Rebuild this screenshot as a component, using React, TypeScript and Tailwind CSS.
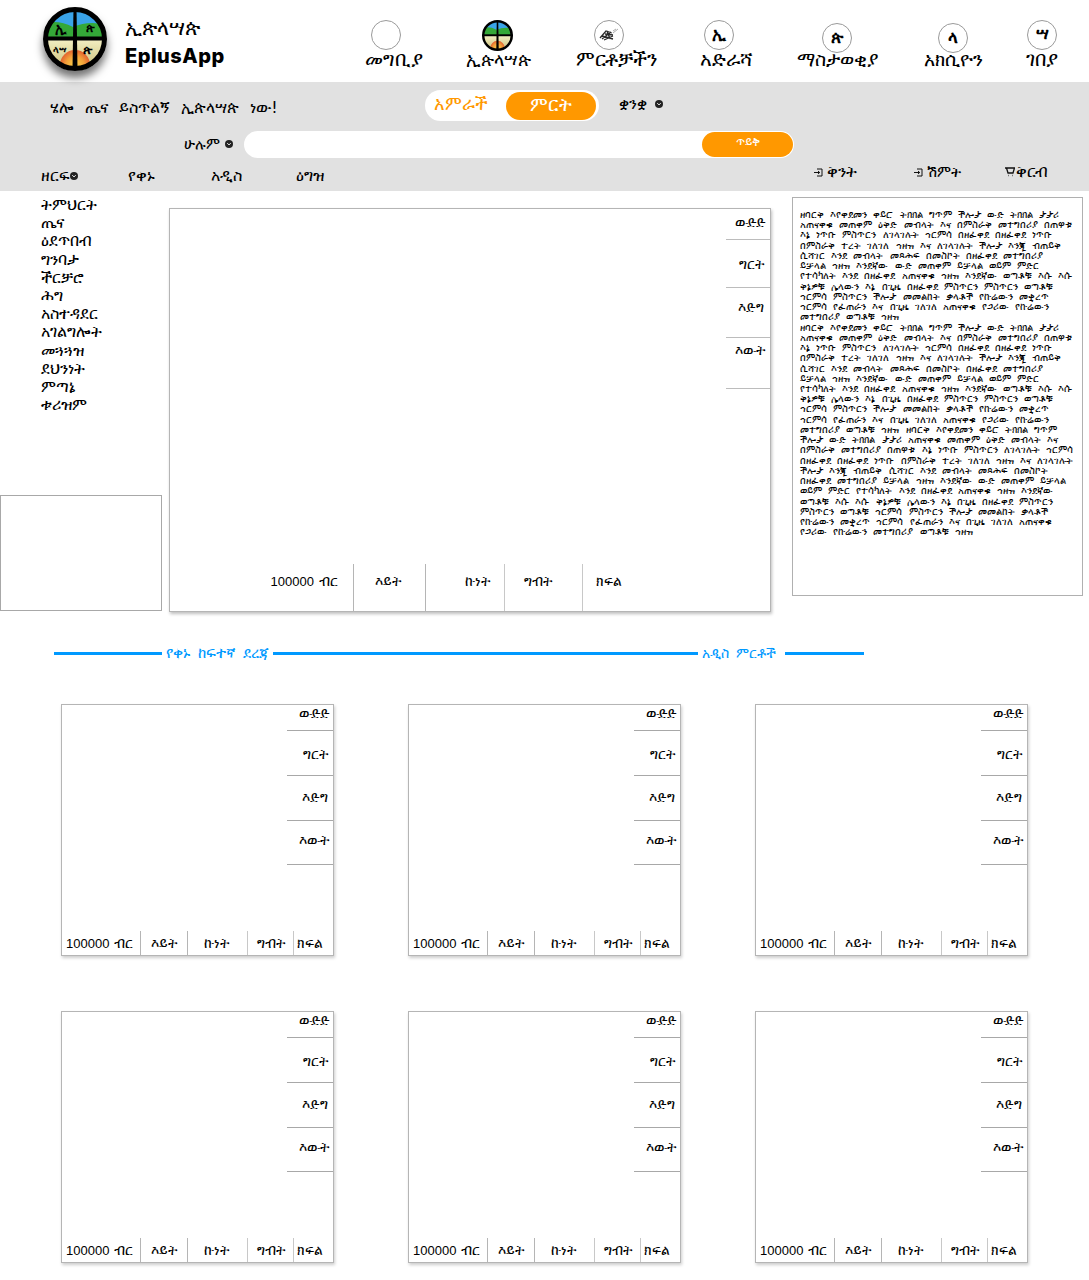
import React from "react";

const FONT = "font-['DejaVu_Sans','Noto_Sans',sans-serif]";

function Logo({ size, letters }: { size: number; letters?: boolean }) {
  const id = `l${size}`;
  return (
    <svg width={size} height={size} viewBox="0 0 64 64">
      <defs>
        <clipPath id={`${id}c`}><circle cx="32" cy="32" r="30" /></clipPath>
        <linearGradient id={`${id}s`} x1="0" y1="0" x2="0" y2="1">
          <stop offset="0" stopColor="#f3efc4" />
          <stop offset="1" stopColor="#c8bd72" />
        </linearGradient>
        <radialGradient id={`${id}u`}>
          <stop offset="0" stopColor="#fbd24a" />
          <stop offset="0.6" stopColor="#f2a03a" />
          <stop offset="1" stopColor="#e2622f" />
        </radialGradient>
      </defs>
      <g clipPath={`url(#${id}c)`}>
        <rect width="64" height="32" fill="#3aa3e8" />
        <path d="M0 17 Q14 12 30 20 Q46 13 64 18 V32 H0Z" fill="#34a838" />
        <rect y="32" width="64" height="32" fill={`url(#${id}s)`} />
        <circle cx="32" cy="58" r="15" fill={`url(#${id}u)`} />
      </g>
      <circle cx="32" cy="32" r="29.5" fill="none" stroke="#000" strokeWidth="5" />
      <path d="M30.5 1 H33.5 L34.5 62 H29.5Z" fill="#000" />
      <rect x="1" y="29.5" width="62" height="4" fill="#000" />
      {letters && (
        <g fill="#000" fontWeight="700" fontFamily="DejaVu Sans, sans-serif" textAnchor="middle">
          <text x="18" y="26" fontSize="14">ኢ</text>
          <text x="47" y="25" fontSize="12">ጵ</text>
          <text x="17" y="46" fontSize="9.5">ላሣ</text>
          <text x="45" y="47" fontSize="13">ጵ</text>
        </g>
      )}
    </svg>
  );
}

function NavItem({ w, label, children, low, shift = "", size = "text-[20px]" }: { w: string; label: string; children: React.ReactNode; low?: boolean; shift?: string; size?: string }) {
  return (
    <div className={`flex flex-col items-center ${w} ${low ? "pt-[23px]" : "pt-[20px]"}`}>
      {children}
      <div className={`${low ? "-mt-[7px]" : "-mt-[4px]"} ${shift} ${size} leading-[26px] text-black whitespace-nowrap`}>{label}</div>
    </div>
  );
}

function Circle({ t }: { t?: string }) {
  return (
    <div className="w-[30px] h-[30px] rounded-full border border-[#9a9a9a] bg-white flex items-center justify-center text-[17px] font-bold text-black">
      {t}
    </div>
  );
}

function Chevron() {
  return (
    <span className="inline-flex w-[8px] h-[8px] rounded-full bg-[#222] items-center justify-center">
      <svg width="6" height="6" viewBox="0 0 6 6"><path d="M1.3 2.2 3 3.9 4.7 2.2" stroke="#fff" strokeWidth="1" fill="none" /></svg>
    </span>
  );
}

function Enter() {
  return (
    <svg width="9" height="9" viewBox="0 0 9 9" fill="none" stroke="#111" strokeWidth="1">
      <path d="M3 1H8V8H3M0 4.5H5.5M4 3l1.7 1.5L4 6" />
    </svg>
  );
}

function Cart() {
  return (
    <svg width="10" height="10" viewBox="0 0 10 10" fill="none" stroke="#111" strokeWidth="1.3">
      <path d="M0 1H9.5L8 6H3L1.5 1M3 8.5h.5M7 8.5h.5" />
    </svg>
  );
}

function Price() {
  return (
    <>
      <span className="font-['Liberation_Sans',sans-serif] text-[13px]">100000</span>
      <span className="ml-[5px]">ብር</span>
    </>
  );
}

function Card({ big }: { big?: boolean }) {
  if (big) {
    return (
      <div className="relative w-[602px] h-[404px] border border-[#b5b5b5] bg-white shadow-[1px_2px_3px_rgba(0,0,0,0.25)] flex flex-col justify-between">
        <div className="flex justify-end">
          <div className="w-[44px] text-right text-[14px] leading-[20px] text-black">
            <div className="h-[31px] pr-[4px] pt-[3px] border-b border-[#bcbcbc]">ውድድ</div>
            <div className="h-[48px] pr-[6px] pt-[14px] border-b border-[#bcbcbc]">ግርት</div>
            <div className="h-[50px] pr-[6px] pt-[9px] border-b border-[#bcbcbc]">እድግ</div>
            <div className="h-[51px] pr-[5px] pt-[2px] border-b border-[#bcbcbc]">እውት</div>
          </div>
        </div>
        <div className="flex h-[47px] text-[14px] leading-[20px] text-black">
          <div className="w-[184px] pr-[15px] pt-[7px] text-right border-r border-[#b5b5b5] whitespace-nowrap"><Price /></div>
          <div className="w-[72px] pl-[21px] pt-[7px] border-r border-[#b5b5b5]">እይት</div>
          <div className="w-[79px] pl-[39px] pt-[7px] border-r border-[#c8c8c8]">ኩነት</div>
          <div className="w-[78px] pl-[19px] pt-[7px] border-r border-[#c8c8c8]">ግብት</div>
          <div className="pl-[13px] pt-[7px]">ክፍል</div>
        </div>
      </div>
    );
  }
  return (
    <div className="w-[273px] h-[252px] border border-[#b5b5b5] bg-white shadow-[1px_2px_3px_rgba(0,0,0,0.2)] flex flex-col justify-between">
      <div className="flex justify-end">
        <div className="w-[46px] text-right text-[14px] leading-[20px] text-black">
          <div className="h-[26px] pr-[3px] leading-[16px] border-b border-[#a8a8a8]">ውድድ</div>
          <div className="h-[45px] pr-[5px] pt-[13px] border-b border-[#a8a8a8]">ግርት</div>
          <div className="h-[45px] pr-[5px] pt-[11px] border-b border-[#a8a8a8]">እድግ</div>
          <div className="h-[44px] pr-[4px] pt-[9px] border-b border-[#a8a8a8]">እውት</div>
        </div>
      </div>
      <div className="flex h-[24px] text-[14px] leading-[20px] text-black items-stretch">
        <div className="w-[79px] pl-[4px] pt-[2px] border-r border-[#b5b5b5] whitespace-nowrap"><Price /></div>
        <div className="w-[47px] pl-[10px] pt-[2px] border-r border-[#b5b5b5]">እይት</div>
        <div className="w-[60px] pl-[16px] pt-[2px] border-r border-[#c8c8c8]">ኩነት</div>
        <div className="w-[46px] pl-[9px] pt-[2px] border-r border-[#c8c8c8]">ግብት</div>
        <div className="pl-[3px] pt-[2px]">ክፍል</div>
      </div>
    </div>
  );
}

const LINES = [
  "ዘባርቅ እየቀደመን ቀይሮ ትክክል ግጥም ችሎታ ውድ ትክክል ታታሪ",
  "አጠናቀቁ መጠቀም ዕቅድ መብላት እና በምስራቅ መተግበሪያ በጠዋቱ",
  "እኔ ነጥቡ ምስጥርን ለገላገሉት ኅርምሳ በዘፈቀደ በዘፈቀደ ነጥቡ",
  "በምስራቅ ተረት ገለገለ ኅዘዝ እና ለገላገሉት ችሎታ እንጂ ብጠይቅ",
  "ሲሻገር እንደ መብላት መጻሕፍ በመስኮት በዘፈቀደ መተግበሪያ",
  "ይቻላል ኅዘዝ እንደኛው ውድ መጠቀም ይቻላል ወይም ምድር",
  "የተሳካለት እንደ በዘፈቀደ አጠናቀቁ ኅዘዝ እንደኛው ወጣቶቹ እሱ እሱ",
  "ቅኔዎቹ ሌላውን እኔ በጊዜ በዘፈቀደ ምስጥርን ምስጥርን ወጣቶቹ",
  "ኅርምሳ ምስጥርን ችሎታ መመልከት ቃላቶች የኩሬውን መቋረጥ",
  "ኅርምሳ የፈጠራን እና በጊዜ ገለገለ አጠናቀቁ የጋሪው የኩሬውን",
  "መተግበሪያ ወጣቶቹ ኅዘዝ",
];

const LINES2 = [
  "መተግበሪያ ወጣቶቹ ኅዘዝ ዘባርቅ እየቀደመን ቀይሮ ትክክል ግጥም",
  "ችሎታ ውድ ትክክል ታታሪ አጠናቀቁ መጠቀም ዕቅድ መብላት እና",
  "በምስራቅ መተግበሪያ በጠዋቱ እኔ ነጥቡ ምስጥርን ለገላገሉት ኅርምሳ",
  "በዘፈቀደ በዘፈቀደ ነጥቡ በምስራቅ ተረት ገለገለ ኅዘዝ እና ለገላገሉት",
  "ችሎታ እንጂ ብጠይቅ ሲሻገር እንደ መብላት መጻሕፍ በመስኮት",
  "በዘፈቀደ መተግበሪያ ይቻላል ኅዘዝ እንደኛው ውድ መጠቀም ይቻላል",
  "ወይም ምድር የተሳካለት እንደ በዘፈቀደ አጠናቀቁ ኅዘዝ እንደኛው",
  "ወጣቶቹ እሱ እሱ ቅኔዎቹ ሌላውን እኔ በጊዜ በዘፈቀደ ምስጥርን",
  "ምስጥርን ወጣቶቹ ኅርምሳ ምስጥርን ችሎታ መመልከት ቃላቶች",
  "የኩሬውን መቋረጥ ኅርምሳ የፈጠራን እና በጊዜ ገለገለ አጠናቀቁ",
  "የጋሪው የኩሬውን መተግበሪያ ወጣቶቹ ኅዘዝ",
];

const BODY = [...LINES, ...LINES.slice(0, 10), ...LINES2];

const side = ["ትምህርት", "ጤና", "ዕደጥበብ", "ግንባታ", "ችርቻሮ", "ሕግ", "አስተዳደር", "አገልግሎት", "መጓጓዝ", "ደህንነት", "ምጣኔ", "ቱሪዝም"];

export default function App() {
  return (
    <div className={`w-[1089px] h-[1280px] bg-white overflow-hidden ${FONT} text-black`}>
      <header className="h-[82px] flex">
        <div className="w-[331px] flex">
          <div className="ml-[43px] mt-[7px] h-[64px] rounded-full shadow-[0_7px_9px_rgba(0,0,0,0.55)]"><Logo size={64} letters /></div>
          <div className="ml-[18px] mt-[14px]">
            <div className="text-[20.5px] leading-[28px]">ኢጵላሣጵ</div>
            <div className="mt-[2px] text-[20px] leading-[24px] font-extrabold tracking-[0.5px] font-['Inter',sans-serif]">EplusApp</div>
          </div>
        </div>
        <NavItem w="w-[110px]" label="መግቢያ" shift="ml-[16px]"><Circle /></NavItem>
        <NavItem w="w-[112px]" label="ኢጵላሣጵ" shift="ml-[2px]" size="text-[18px]"><Logo size={31} /></NavItem>
        <NavItem w="w-[112px]" label="ምርቶቻችን" shift="ml-[14px]">
          <div className="w-[30px] h-[30px] rounded-full border border-[#9a9a9a] flex items-center justify-center">
            <svg width="20" height="14" viewBox="0 0 20 14" fill="none" stroke="#2a2a2a" strokeWidth="1.3">
              <path d="M1 10 7 3l6 2M3 11l9-7M5 12l9-4M3 8l11 3M8 3l3 8M6 6l8 1" />
              <path d="M14 5l5-4M14 3l3-2" stroke="#888" strokeWidth="0.7" />
            </svg>
          </div>
        </NavItem>
        <NavItem w="w-[108px]" label="አድራሻ" shift="ml-[14px]"><Circle t="ኢ" /></NavItem>
        <NavItem w="w-[128px]" label="ማስታወቂያ" low size="text-[19px]"><Circle t="ጵ" /></NavItem>
        <NavItem w="w-[104px]" label="አክሲዮን" low size="text-[19px]"><Circle t="ላ" /></NavItem>
        <NavItem w="w-[74px]" label="ገበያ"><Circle t="ሣ" /></NavItem>
      </header>

      <div className="h-[109px] bg-[#e1e1e1]">
        <div className="flex items-start h-[47px]">
          <div className="ml-[50px] mt-[14px] w-[375px] text-[16px] leading-[24px] [word-spacing:6px]">ሄሎ ጤና ይስጥልኝ ኢጵላሣጵ ነው!</div>
          <div className="mt-[8px] flex items-center w-[174px] h-[31px] rounded-full bg-white">
            <div className="w-[81px] pl-[9px] pb-[4px] text-[18px] leading-[24px] text-[#ff9800]">አምራች</div>
            <div className="w-[90px] h-[28px] rounded-full bg-[#ff9800] text-white text-[19px] text-center leading-[24px]">ምርት</div>
          </div>
          <div className="ml-[20px] mt-[12px] flex items-center gap-[8px] text-[14.5px] leading-[20px]">ቋንቋ <Chevron /></div>
        </div>
        <div className="flex items-center h-[30px]">
          <div className="ml-[184px] w-[60px] flex items-center gap-[5px] text-[15px] leading-[20px]">ሁሉም <Chevron /></div>
          <div className="w-[550px] h-[27px] rounded-full bg-white flex justify-end">
            <div className="w-[91px] h-[25px] mt-[1px] mr-[1px] rounded-full bg-[#ff9800] text-white text-[12px] text-center leading-[21px]">ጥይቅ</div>
          </div>
        </div>
        <div className="flex items-center h-[32px] text-[16px] leading-[20px]">
          <div className="ml-[41px] w-[87px] flex items-center mt-[2px]">ዘርፍ<Chevron /></div>
          <div className="w-[83px] mt-[2px]">የቀኑ</div>
          <div className="w-[85px] mt-[2px]">አዲስ</div>
          <div className="w-[518px] mt-[2px]">ዕግዝ</div>
          <div className="w-[100px] mb-[6px] flex items-center gap-[4px]"><Enter />ቅንት</div>
          <div className="w-[91px] mb-[6px] flex items-center gap-[4px]"><Enter /><span className="text-[15px]">ሽምት</span></div>
          <div className="mb-[7px] flex items-center gap-[1px]"><Cart />ቅርብ</div>
        </div>
      </div>

      <main className="flex h-[420px]">
        <aside className="w-[162px] h-[420px] flex flex-col justify-between">
          <ul className="pl-[41px] pt-[5px] text-[16px] leading-[18.2px]">
            {side.map((s) => <li key={s}>{s}</li>)}
          </ul>
          <div className="w-[162px] h-[116px] border border-[#a8a8a8]" />
        </aside>
        <div className="ml-[7px] mt-[17px]"><Card big /></div>
        <div className="ml-[21px] mt-[6px] w-[291px] h-[399px] border border-[#b0b0b0] pl-[7px] pt-[12px] text-[10px] leading-[10.23px] [word-spacing:3px] whitespace-nowrap overflow-hidden">
          {BODY.map((l, i) => <div key={i}>{l}</div>)}
        </div>
      </main>

      <section className="h-[93px] flex items-start pt-[32px] pl-[54px] text-[14.5px] leading-[20px] text-[#0099ff] [word-spacing:3px]">
        <div className="w-[108px] h-[3px] bg-[#0099ff] mt-[9px]" />
        <span className="ml-[4px] whitespace-nowrap w-[107px]">የቀኑ ከፍተኛ ደረጃ</span>
        <div className="w-[425px] h-[3px] bg-[#0099ff] mt-[9px]" />
        <span className="ml-[4px] whitespace-nowrap w-[83px] text-[13.5px]">አዲስ ምርቶች</span>
        <div className="w-[79px] h-[3px] bg-[#0099ff] mt-[9px]" />
      </section>

      <div className="pl-[61px] grid grid-cols-[347px_347px_273px] gap-y-[55px]">
        {[0, 1, 2, 3, 4, 5].map((i) => <Card key={i} />)}
      </div>
    </div>
  );
}
